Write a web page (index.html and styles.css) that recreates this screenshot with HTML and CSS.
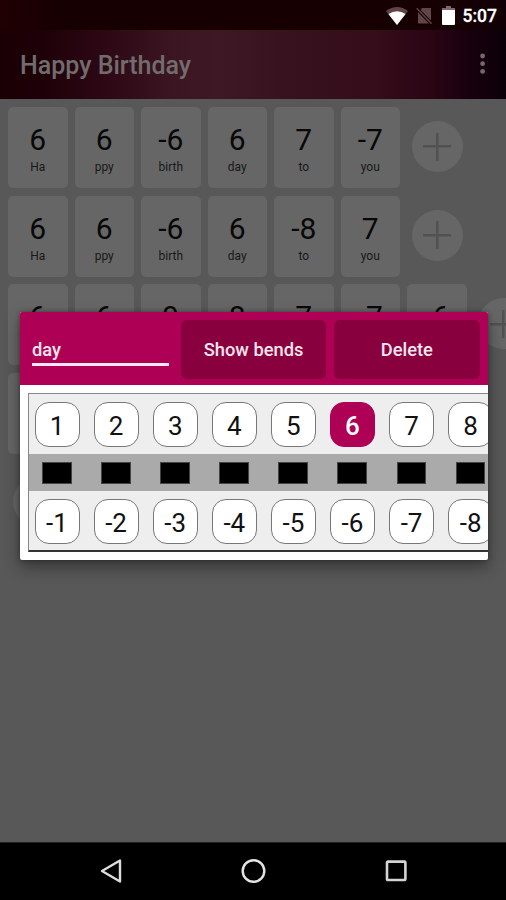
FILE: index.html
```html
<!DOCTYPE html>
<html lang="en">
<head>
<meta charset="utf-8">
<title>Happy Birthday</title>
<link rel="stylesheet" href="styles.css">
</head>
<body>
<div class="screen">
  <div class="status">
    <svg width="22" height="18" viewBox="0 0 22 18"><path d="M0 4Q11-4 22 4L11 18Z" fill="#604448"/><path d="M2.4 7Q11 1.5 19.6 7L11 18Z" fill="#fff"/></svg>
    <svg class="sim" width="17" height="18" viewBox="0 0 17 18"><path d="M6 1H15V13.5L4.5 3Z M2 5.2L13 16.5H2Z" fill="#604448"/><path d="M.7 1.2L15.6 16.7" stroke="#604448" stroke-width="1.4"/></svg>
    <svg class="battery" width="13" height="19" viewBox="0 0 13 19"><path d="M4 0H9V2H13V5H0V2H4Z" fill="#806468"/><path d="M0 4H13V18Q13 19 12 19H1Q0 19 0 18Z" fill="#fff"/></svg>
    <span class="clock">5:07</span>
  </div>
  <header class="appbar">
    <h1>Happy Birthday</h1>
    <svg width="6" height="22" viewBox="0 0 6 22"><g fill="#77686e"><circle cx="2.6" cy="3" r="2.4"/><circle cx="2.6" cy="10.7" r="2.4"/><circle cx="2.6" cy="18.4" r="2.4"/></g></svg>
  </header>
  <main class="sheet">
    <div class="line">
      <div class="note"><b>6</b><i>Ha</i></div><div class="note"><b>6</b><i>ppy</i></div><div class="note"><b>-6</b><i>birth</i></div><div class="note"><b>6</b><i>day</i></div><div class="note"><b>7</b><i>to</i></div><div class="note"><b>-7</b><i>you</i></div><div class="add"></div>
    </div>
    <div class="line">
      <div class="note"><b>6</b><i>Ha</i></div><div class="note"><b>6</b><i>ppy</i></div><div class="note"><b>-6</b><i>birth</i></div><div class="note"><b>6</b><i>day</i></div><div class="note"><b>-8</b><i>to</i></div><div class="note"><b>7</b><i>you</i></div><div class="add"></div>
    </div>
    <div class="line">
      <div class="note"><b>6</b></div><div class="note"><b>6</b></div><div class="note"><b>9</b></div><div class="note"><b>8</b></div><div class="note"><b>7</b></div><div class="note"><b>-7</b></div><div class="note"><b>-6</b></div><div class="add"></div>
    </div>
    <div class="line">
      <div class="note"></div><div class="note"></div><div class="note"></div><div class="note"></div><div class="note"></div><div class="note"></div>
    </div>
    <div class="line"><div class="add"></div></div>
  </main>
  <nav class="nav">
    <svg width="24" height="28" viewBox="0 0 24 28"><path d="M22 3.5V24.5L4 14Z" fill="none" stroke="#ddd" stroke-width="2.4" stroke-linejoin="round"/></svg>
    <svg width="26" height="26" viewBox="0 0 26 26"><circle cx="13.5" cy="13" r="10.8" fill="none" stroke="#e4e4e4" stroke-width="2.4"/></svg>
    <svg width="24" height="24" viewBox="0 0 24 24"><rect x="3" y="2.6" width="18.4" height="18.4" rx=".8" fill="none" stroke="#d4d4d4" stroke-width="2.6"/></svg>
  </nav>
  <section class="dialog">
    <div class="tools">
      <div class="field">day</div>
      <div class="button">Show bends</div>
      <div class="button">Delete</div>
    </div>
    <div class="body">
      <div class="harp">
        <div class="keys"><span>1</span><span>2</span><span>3</span><span>4</span><span>5</span><span class="on">6</span><span>7</span><span>8</span></div>
        <div class="holes"><span></span><span></span><span></span><span></span><span></span><span></span><span></span><span></span></div>
        <div class="keys"><span>-1</span><span>-2</span><span>-3</span><span>-4</span><span>-5</span><span>-6</span><span>-7</span><span>-8</span></div>
      </div>
    </div>
  </section>
</div>
</body>
</html>
```
FILE: styles.css
```css
* { box-sizing: border-box; }
body { margin: 0; font-family: Roboto, "Liberation Sans", sans-serif; }
svg { display: block; flex: none; }
.screen {
  position: relative;
  width: 506px;
  height: 900px;
  overflow: hidden;
  background: #585858;
  display: flex;
  flex-direction: column;
}
.status {
  flex: none;
  height: 30px;
  padding: 1px 9px 0 0;
  background: linear-gradient(90deg, #200003, #160002 12%, #160002 90%, #100006);
  display: flex;
  justify-content: flex-end;
  align-items: center;
}
.sim { margin-left: 8px; }
.battery { margin-left: 9px; }
.clock { margin-left: 8px; font-size: 17.5px; font-weight: 500; line-height: 20px; color: #fff; -webkit-text-stroke: .3px #fff; }
.appbar {
  flex: none;
  height: 69px;
  padding: 0 20px;
  display: flex;
  align-items: center;
  justify-content: space-between;
  background: linear-gradient(90deg, #1a0005 0, #1e0008 8%, #2b0713 19%, #3b1521 34%, #3e1824 43%, #38121e 56%, #340c1a 75%, #2b0514 85%, #17000e 93%, #0c0008 100%);
}
.appbar svg { margin-top: -1px; }
h1 { margin: 3px 0 0; font-size: 25px; font-weight: 500; line-height: 30px; color: #716d6e; }
.sheet { flex: 1; min-height: 0; padding: 8px 0 0 8px; overflow: hidden; display: flex; flex-direction: column; gap: 7.7px; }
.line { flex: none; height: 81px; display: flex; gap: 7px; }
.note {
  flex: none;
  width: 59.5px;
  height: 81px;
  padding-top: 15px;
  border-radius: 5px;
  background: #666;
  color: #080808;
  text-align: center;
}
.note b { display: block; font-size: 30px; font-weight: 400; line-height: 35px; }
.note i { display: block; font-size: 12px; font-style: normal; line-height: 14px; margin-top: 3px; color: #181818; }
.add {
  flex: none;
  width: 51px;
  height: 51px;
  margin: 14px 0 0 4.5px;
  border-radius: 50%;
  background:
    linear-gradient(#515151, #515151) center / 28px 2.5px no-repeat,
    linear-gradient(#515151, #515151) center / 2.5px 28px no-repeat,
    #666;
}
.nav { flex: none; height: 58px; padding-bottom: 2px; background: #000; border-top: 1px solid #222; display: flex; justify-content: center; gap: 118px; align-items: center; }
.dialog {
  position: absolute;
  left: 20px;
  top: 312px;
  width: 467.5px;
  height: 247.5px;
  overflow: hidden;
  border-radius: 2px;
  background: #fff;
  display: flex;
  flex-direction: column;
  box-shadow: 0 7px 16px rgba(0, 0, 0, .4), 0 0 4px rgba(0, 0, 0, .35);
}
.tools { flex: none; height: 73px; background: #ae0054; padding: 8px 8px 0 12px; display: flex; gap: 8px; color: #f8e6ee; font-size: 18.3px; }
.field { width: 137px; height: 46px; margin-right: 4px; padding-top: 19px; line-height: 22px; border-bottom: 3px solid #ffe8f2; font-weight: 500; }
.button { width: 145.5px; height: 58.5px; border-radius: 6px; background: #88003d; line-height: 59px; text-align: center; font-weight: 500; }
.body { padding: 8px 0 0 8px; }
.harp { width: 480px; height: 159px; border: 1px solid #888; border-bottom: 2px solid #333; background: #eee; }
.keys { height: 60px; padding: 7.5px 0 0 5.5px; display: flex; gap: 14.1px; }
.keys span {
  flex: none;
  width: 45px;
  height: 45px;
  border: 1px solid #777;
  border-radius: 14px;
  background: #fff;
  color: #111;
  font-size: 26px;
  line-height: 46px;
  text-align: center;
}
.keys .on { background: #ae0054; border-color: #ae0054; color: #fff; font-weight: 500; }
.holes { height: 37px; background: #aaa; padding: 7.5px 0 0 13px; display: flex; gap: 29.6px; }
.holes span { flex: none; width: 29.5px; height: 22px; background: #000; border: 1px solid #444; }
```
